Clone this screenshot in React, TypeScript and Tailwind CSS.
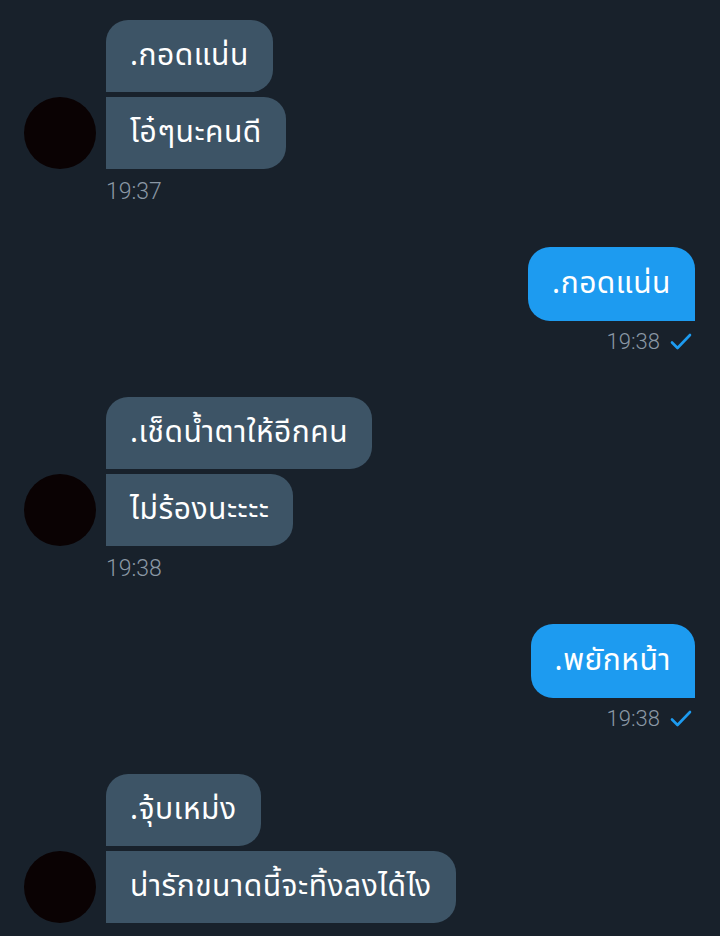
import React from "react";

type Msg =
  | { kind: "in"; lines: string[]; time: string }
  | { kind: "out"; text: string; time: string };

const messages: Msg[] = [
  { kind: "in", lines: [".กอดแน่น", "โอ๋ๆนะคนดี"], time: "19:37" },
  { kind: "out", text: ".กอดแน่น", time: "19:38" },
  { kind: "in", lines: [".เช็ดน้ำตาให้อีกคน", "ไม่ร้องนะะะะ"], time: "19:38" },
  { kind: "out", text: ".พยักหน้า", time: "19:38" },
  { kind: "in", lines: [".จุ้บเหม่ง", "น่ารักขนาดนี้จะทิ้งลงได้ไง"], time: "" },
];

const thai = { fontFamily: '"Noto Sans Thai", "Noto Sans", "DejaVu Sans", sans-serif' };

const Check = () => (
  <svg width="22" height="18" viewBox="0 0 22 18" fill="none">
    <path d="M2 9.5 L7.5 15 L20 2" stroke="#1d9bf0" strokeWidth="2.6" strokeLinecap="round" strokeLinejoin="round" />
  </svg>
);

const Incoming = ({ lines, time }: { lines: string[]; time: string }) => (
  <div className="flex flex-col">
    <div className="flex items-end pl-[24px]">
      <div className="w-[72px] h-[72px] rounded-full bg-[#0a0203] shrink-0" />
      <div className="flex flex-col items-start gap-[5px] ml-[10px]">
        {lines.map((l, i) => (
          <div
            key={i}
            style={thai}
            className={`bg-[#3d5466] text-white text-[30px] tracking-[0.5px] h-[72px] flex items-center px-[24px] rounded-r-[22px] ${i === 0 ? "rounded-tl-[22px]" : ""}`}
          >
            {l}
          </div>
        ))}
      </div>
    </div>
    {time && (
      <div className="pl-[106px] mt-[8px] text-[23px] leading-[30px] font-light text-[#8b98a5]" style={{ fontFamily: "Roboto, sans-serif" }}>
        {time}
      </div>
    )}
  </div>
);

const Outgoing = ({ text, time }: { text: string; time: string }) => (
  <div className="flex flex-col items-end pr-[25px]">
    <div
      style={thai}
      className="bg-[#1d9bf0] text-white text-[30px] tracking-[0.5px] h-[74px] flex items-center px-[24px] rounded-[22px] rounded-br-none"
    >
      {text}
    </div>
    <div className="flex items-center gap-[10px] mt-[6px] pr-[3px]">
      <span className="text-[22px] leading-[30px] font-light text-[#8b98a5]" style={{ fontFamily: "Roboto, sans-serif" }}>
        {time}
      </span>
      <Check />
    </div>
  </div>
);

export default function App() {
  return (
    <div className="w-[720px] h-[936px] bg-[#18212b] overflow-hidden pt-[20px] flex flex-col gap-[40px]">
      {messages.map((m, i) =>
        m.kind === "in" ? (
          <Incoming key={i} lines={m.lines} time={m.time} />
        ) : (
          <Outgoing key={i} text={m.text} time={m.time} />
        )
      )}
    </div>
  );
}
